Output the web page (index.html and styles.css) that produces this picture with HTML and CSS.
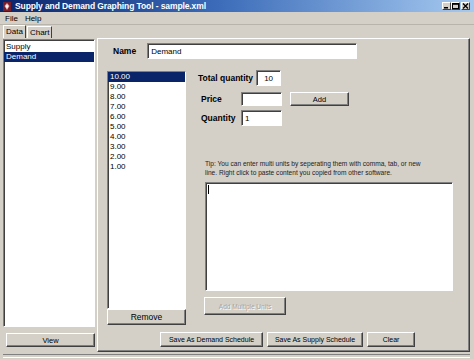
FILE: index.html
```html
<!DOCTYPE html>
<html lang="en">
<head>
    <meta charset="UTF-8">
    <title>Supply and Demand Graphing Tool - sample.xml</title>
    <link rel="stylesheet" href="styles.css">
</head>
<body>
    <div class="window">
        <!-- Title bar -->
        <div class="titlebar">
            <svg class="app-icon" width="8" height="9" viewBox="0 0 8 9">
                <rect x="0" y="0" width="8" height="9" fill="#7a1d2a"/>
                <path d="M4 1 L6.5 4 L4 8 L1.5 4 Z" fill="#e8b0b0"/>
                <path d="M4 2.5 L5.3 4.3 L4 6.5 L2.7 4.3 Z" fill="#fff"/>
            </svg>
            <span class="title">Supply and Demand Graphing Tool - sample.xml</span>
            <div class="controls">
                <span class="ctl"><svg width="7" height="6" viewBox="0 0 7 6"><rect x="1" y="4" width="4" height="1.5" fill="#000"/></svg></span>
                <span class="ctl"><svg width="7" height="6" viewBox="0 0 7 6"><rect x="0.5" y="0.5" width="6" height="5" fill="none" stroke="#000"/><rect x="0.5" y="0.5" width="6" height="1.3" fill="#000"/></svg></span>
                <span class="ctl close"><svg width="7" height="6" viewBox="0 0 7 6"><path d="M1 0.5 L6 5.5 M6 0.5 L1 5.5" stroke="#000" stroke-width="1.3"/></svg></span>
            </div>
        </div>

        <!-- Menu -->
        <div class="menubar">
            <span>File</span>
            <span>Help</span>
        </div>

        <!-- Tabs -->
        <div class="tabs">
            <span class="tab active">Data</span>
            <span class="tab">Chart</span>
        </div>

        <div class="main">
            <!-- Schedule list -->
            <div class="sidebar">
                <div class="list schedules">
                    <div class="item">Supply</div>
                    <div class="item selected">Demand</div>
                </div>
                <button class="btn view-btn">View</button>
            </div>

            <!-- Data panel -->
            <div class="panel">
                <div class="name-row">
                    <label class="lbl">Name</label>
                    <div class="field name-field">Demand</div>
                </div>

                <div class="content">
                    <div class="values">
                        <div class="list prices">
                            <div class="item selected">10.00</div>
                            <div class="item">9.00</div>
                            <div class="item">8.00</div>
                            <div class="item">7.00</div>
                            <div class="item">6.00</div>
                            <div class="item">5.00</div>
                            <div class="item">4.00</div>
                            <div class="item">3.00</div>
                            <div class="item">2.00</div>
                            <div class="item">1.00</div>
                        </div>
                        <button class="btn remove-btn">Remove</button>
                    </div>

                    <div class="editor">
                        <div class="row total-row">
                            <label class="lbl">Total quantity</label>
                            <div class="field total-field">10</div>
                        </div>
                        <div class="row price-row">
                            <label class="lbl short">Price</label>
                            <div class="field small-field"></div>
                            <button class="btn add-btn">Add</button>
                        </div>
                        <div class="row qty-row">
                            <label class="lbl short">Quantity</label>
                            <div class="field small-field tall">1</div>
                        </div>

                        <p class="tip">Tip: You can enter multi units by seperating them with comma, tab, or new line. Right click to paste content you copied from other software.</p>
                        <div class="field multi-area"><span class="caret"></span></div>
                        <button class="btn multi-btn" disabled>Add Multiple Units</button>
                    </div>
                </div>

                <div class="actions">
                    <button class="btn act-demand">Save As Demand Schedule</button>
                    <button class="btn act-supply">Save As Supply Schedule</button>
                    <button class="btn act-clear">Clear</button>
                </div>
            </div>
        </div>
        <div class="frame-bottom"></div>
    </div>
</body>
</html>
```

FILE: styles.css
```css
body {
    margin: 0;
    background-color: #d4d0c8;
    font-family: 'Liberation Sans', Arial, sans-serif;
    color: #000;
}

.window {
    width: 474px;
    height: 359px;
    overflow: hidden;
    background-color: #d4d0c8;
}

/* Title bar */
.titlebar {
    height: 12px;
    display: flex;
    align-items: center;
    padding: 0 4px 0 3px;
    background: linear-gradient(to right, #0a246a 0%, #3a6ab8 45%, #a6caf0 100%);
}

.app-icon {
    margin-right: 4px;
}

.title {
    color: #fff;
    font-weight: bold;
    font-size: 8.5px;
    letter-spacing: -0.1px;
}

.controls {
    margin-left: auto;
    display: flex;
}

.ctl {
    width: 9px;
    height: 8px;
    display: flex;
    align-items: center;
    justify-content: center;
    background-color: #d4d0c8;
    border: 1px solid;
    border-color: #fff #404040 #404040 #fff;
    box-sizing: border-box;
}

.ctl.close {
    margin-left: 1px;
}

/* Menu */
.menubar {
    height: 12px;
    display: flex;
    align-items: center;
    gap: 7px;
    padding-left: 5px;
    font-size: 8px;
    border-bottom: 1px solid #b8b4ac;
}

/* Tabs */
.tabs {
    height: 12px;
    margin-top: 1px;
    padding-left: 3px;
    display: flex;
    align-items: flex-end;
}

.tab {
    font-size: 8px;
    height: 11px;
    line-height: 11px;
    padding: 0 2px;
    border: 1px solid;
    border-color: #fff #404040 transparent #fff;
    border-bottom: none;
}

.tab.active {
    height: 12px;
}

.tab + .tab {
    margin-left: 1px;
}

/* Main area */
.main {
    display: flex;
    padding-left: 3px;
    height: 315px;
}

.sidebar {
    width: 92px;
    display: flex;
    flex-direction: column;
}

.list {
    background-color: #fff;
    border: 1px solid;
    border-color: #808080 #fff #fff #808080;
    box-shadow: inset 1px 1px 0 #404040;
    box-sizing: border-box;
    font-size: 8px;
}

.item {
    height: 10px;
    line-height: 10px;
    padding-left: 2px;
}

.item.selected {
    background-color: #0a246a;
    color: #fff;
}

.schedules {
    height: 288px;
    margin-top: 1px;
    padding-top: 2px;
}

.btn {
    font-family: 'Liberation Sans', Arial, sans-serif;
    font-size: 7.5px;
    background-color: #d4d0c8;
    color: #000;
    border: 1px solid;
    border-color: #fff #404040 #404040 #fff;
    box-shadow: inset -1px -1px 0 #808080;
    box-sizing: border-box;
    padding: 0;
    cursor: pointer;
}

.view-btn {
    height: 14px;
    margin: 6px 0 0 3px;
    width: 89px;
}

/* Panel */
.panel {
    margin-left: 2px;
    width: 373px;
    height: 314px;
    border: 1px solid;
    border-color: #fff #404040 #404040 #fff;
    box-shadow: inset -1px -1px 0 #808080;
    box-sizing: border-box;
    display: flex;
    flex-direction: column;
}

.lbl {
    font-weight: bold;
    font-size: 8.5px;
}

.field {
    background-color: #fff;
    border: 1px solid;
    border-color: #808080 #fff #fff #808080;
    box-shadow: inset 1px 1px 0 #404040;
    box-sizing: border-box;
    font-size: 8px;
    padding-left: 3px;
    display: flex;
    align-items: center;
}

.name-row {
    display: flex;
    align-items: center;
    margin-top: 4px;
    padding-left: 15px;
}

.name-field {
    margin-left: 11px;
    width: 210px;
    height: 16px;
}

.content {
    display: flex;
    margin-top: 11px;
    padding-left: 9px;
    height: 255px;
}

.values {
    width: 79px;
    display: flex;
    flex-direction: column;
}

.prices {
    height: 238px;
    margin-top: 1px;
}

.remove-btn {
    height: 16px;
    font-size: 8.5px;
}

.editor {
    margin-left: 12px;
    width: 256px;
    display: flex;
    flex-direction: column;
}

.row {
    display: flex;
    align-items: center;
}

.lbl.short {
    width: 40px;
    margin-left: 3px;
}

.total-field {
    margin-left: 3px;
    width: 25px;
    height: 16px;
    justify-content: center;
    padding-left: 0;
}

.price-row {
    margin-top: 6px;
}

.small-field {
    width: 41px;
    height: 14px;
}

.small-field.tall {
    height: 16px;
}

.add-btn {
    margin-left: 8px;
    width: 59px;
    height: 14px;
}

.qty-row {
    margin-top: 4px;
}

.tip {
    margin: 33px 0 0 7px;
    font-size: 6.6px;
    line-height: 9px;
    width: 224px;
    color: #222;
}

.multi-area {
    margin: 5px 0 0 7px;
    width: 248px;
    height: 109px;
    align-items: flex-start;
    padding: 2px 0 0 2px;
}

.caret {
    width: 1px;
    height: 9px;
    background-color: #000;
}

.multi-btn {
    margin: 6px 0 0 6px;
    width: 82px;
    height: 18px;
    font-size: 6.5px;
}

.multi-btn:disabled {
    color: #a8a49c;
    text-shadow: 1px 1px 0 #fff;
}

.actions {
    display: flex;
    margin-top: 7px;
    padding-left: 62px;
    gap: 4px;
}

.actions .btn {
    height: 15px;
    font-size: 7px;
}

.act-demand {
    width: 103px;
}

.act-supply {
    width: 96px;
}

.act-clear {
    width: 48px;
}

.frame-bottom {
    height: 2px;
    margin: 1px 4px 0 3px;
    border-top: 1px solid #808080;
    border-bottom: 1px solid #fff;
}
```
